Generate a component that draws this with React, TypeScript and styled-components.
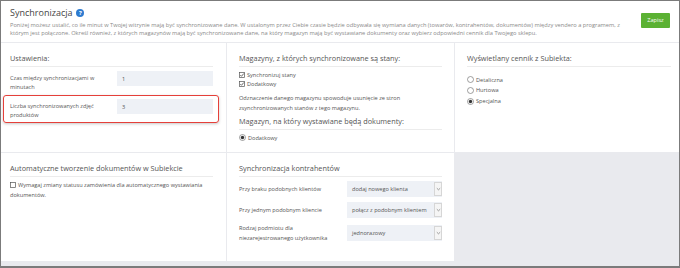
import React from "react";
import styled, { createGlobalStyle } from "styled-components";

const GlobalStyle = createGlobalStyle`
  html, body {
    margin: 0;
    padding: 0;
    background: #fff;
  }
  body {
    font-family: "Open Sans", "Liberation Sans", sans-serif;
    color: #555;
  }
`;

const StyledFrame = styled.div`
  width: 680px;
  height: 268px;
  box-sizing: border-box;
  border: 1px solid #7b7b7b;
  border-bottom-width: 2px;
  background: #e9eaee;
  display: flex;
  flex-direction: column;
  gap: 1px;
`;

const StyledHeader = styled.header`
  height: 41px;
  flex: none;
  background: #fff;
  display: flex;
  justify-content: space-between;
  align-items: flex-start;
  padding: 6px 9px 0 9px;
  box-sizing: border-box;
`;

const StyledTitle = styled.h1`
  margin: 0;
  font-size: 9px;
  line-height: 12px;
  font-weight: 400;
  color: #444;
  display: flex;
  align-items: center;
  gap: 4px;
`;

const StyledHelp = styled.span`
  width: 8px;
  height: 8px;
  border-radius: 50%;
  background: #2d7bd0;
  color: #fff;
  font-size: 6px;
  line-height: 8px;
  font-weight: 700;
  text-align: center;
`;

const StyledDescription = styled.p`
  margin: 1.5px 0 0;
  font-size: 5.7px;
  line-height: 8.7px;
  color: #8a8a8a;
  white-space: nowrap;
`;

const StyledSaveButton = styled.button`
  margin-top: 5.7px;
  width: 29px;
  height: 15px;
  padding: 0;
  border: none;
  border-radius: 1px;
  background: #5bb133;
  color: #fff;
  font-family: inherit;
  font-size: 5.6px;
`;

const StyledGrid = styled.div`
  display: grid;
  grid-template-columns: 225px 227px 1fr;
  grid-template-rows: 109px 108px;
  gap: 1px;
`;

const StyledCard = styled.section<{ $pl: number; $pr: number }>`
  background: #fff;
  padding: 10px ${(p) => p.$pr}px 0 ${(p) => p.$pl}px;
  box-sizing: border-box;
`;

const StyledHeading = styled.h2<{ $mt?: number }>`
  margin: ${(p) => p.$mt ?? 0}px 0 0;
  font-size: 7.3px;
  line-height: 11px;
  font-weight: 400;
  color: #555;
  padding-bottom: 2px;
  border-bottom: 1px solid #ececec;
`;

const StyledFields = styled.div`
  margin-top: 4px;
  display: flex;
  flex-direction: column;
  gap: 7px;
`;

const StyledFieldRow = styled.div<{ $highlighted?: boolean }>`
  position: relative;
  display: flex;
  align-items: flex-start;

  &::after {
    content: "";
    display: ${(p) => (p.$highlighted ? "block" : "none")};
    position: absolute;
    top: -4px;
    bottom: -3px;
    left: -7px;
    right: -6px;
    border: 1px solid #e5403a;
    border-radius: 3px;
    box-shadow: 0 1px 3px rgba(0, 0, 0, 0.22);
  }
`;

const StyledFieldLabel = styled.label<{ $width: number; $inset?: number; $lh?: number }>`
  width: ${(p) => p.$width}px;
  flex: none;
  padding-top: ${(p) => p.$inset ?? 3}px;
  font-size: 5.6px;
  line-height: ${(p) => p.$lh ?? 9}px;
  color: #555;
`;

const StyledInput = styled.input`
  width: 96px;
  height: 15px;
  box-sizing: border-box;
  border: none;
  background: #eef1f6;
  padding: 0 5px;
  font-family: inherit;
  font-size: 5.6px;
  color: #555;
  outline: none;
`;

const StyledChecks = styled.div<{ $mt: number; $lh: number }>`
  margin-top: ${(p) => p.$mt}px;
  font-size: 5.6px;
  line-height: ${(p) => p.$lh}px;
  color: #555;
`;

const StyledCheckLine = styled.div`
  display: flex;
  align-items: center;
  gap: 2px;
`;

const StyledNote = styled.p`
  margin: 4.5px 0 0;
  font-size: 5.6px;
  line-height: 10px;
  color: #555;
`;

const StyledInlineCheck = styled.p`
  margin: 3px 0 0;
  font-size: 5.6px;
  line-height: 10px;
  color: #555;

  svg {
    vertical-align: -0.5px;
    margin-right: 2px;
  }
`;

const StyledSelects = styled.div`
  margin-top: 4px;
  display: flex;
  flex-direction: column;
  gap: 5px;
`;

const StyledSelectRow = styled.div`
  display: flex;
  align-items: center;
`;

const StyledSelect = styled.div`
  width: 95px;
  height: 16px;
  flex: none;
  background: #eef1f6;
  display: flex;
  align-items: center;
  justify-content: space-between;
  padding-left: 5px;
  box-sizing: border-box;
  font-size: 5.6px;
  color: #555;
`;

const StyledSelectArrow = styled.span`
  width: 8px;
  height: 14px;
  box-sizing: border-box;
  border: 1px solid #d6d6d6;
  background: #f5f5f5;
  display: flex;
  align-items: center;
  justify-content: center;
`;

const CheckBox = ({ checked }: { checked?: boolean }) => (
  <svg width="6" height="6" viewBox="0 0 6 6">
    <rect x="0.5" y="0.5" width="5" height="5" fill="#fff" stroke="#555" strokeWidth="0.7" />
    {checked && <path d="M1.3 3.1 L2.5 4.3 L4.8 1.5" fill="none" stroke="#444" strokeWidth="0.8" />}
  </svg>
);

const Radio = ({ checked }: { checked?: boolean }) => (
  <svg width="7" height="7" viewBox="0 0 7 7">
    <circle cx="3.5" cy="3.5" r="3" fill="#fff" stroke="#777" strokeWidth="0.7" />
    {checked && <circle cx="3.5" cy="3.5" r="1.7" fill="#333" />}
  </svg>
);

const Chevron = () => (
  <svg width="5" height="4" viewBox="0 0 5 4">
    <path d="M0.8 1.2 L2.5 2.8 L4.2 1.2" fill="none" stroke="#777" strokeWidth="0.7" />
  </svg>
);

const stockOptions = [
  { label: "Synchronizuj stany", checked: true },
  { label: "Dodatkowy", checked: true },
];

const priceOptions = [
  { label: "Detaliczna", checked: false },
  { label: "Hurtowa", checked: false },
  { label: "Specjalna", checked: true },
];

const clientRows = [
  { label: "Przy braku podobnych klientów", value: "dodaj nowego klienta" },
  { label: "Przy jednym podobnym kliencie", value: "połącz z podobnym klientem" },
  { label: "Rodzaj podmiotu dla niezarejestrowanego użytkownika", value: "jednorazowy" },
];

export default function App() {
  return (
    <>
      <GlobalStyle />
      <StyledFrame>
        <StyledHeader>
          <div>
            <StyledTitle>
              Synchronizacja <StyledHelp>?</StyledHelp>
            </StyledTitle>
            <StyledDescription>
              Poniżej możesz ustalić, co ile minut w Twojej witrynie mają być synchronizowane dane. W ustalonym przez
              Ciebie czasie będzie odbywała się wymiana danych (towarów, kontrahentów, dokumentów) między vendero a
              programem, z
              <br />
              którym jest połączone. Określ również, z których magazynów mają być synchronizowane dane, na który
              magazyn mają być wystawiane dokumenty oraz wybierz odpowiedni cennik dla Twojego sklepu.
            </StyledDescription>
          </div>
          <StyledSaveButton>Zapisz</StyledSaveButton>
        </StyledHeader>

        <StyledGrid>
          <StyledCard $pl={9} $pr={13}>
            <StyledHeading>Ustawienia:</StyledHeading>
            <StyledFields>
              <StyledFieldRow>
                <StyledFieldLabel $width={107}>Czas między synchronizacjami w minutach</StyledFieldLabel>
                <StyledInput defaultValue="1" />
              </StyledFieldRow>
              <StyledFieldRow $highlighted>
                <StyledFieldLabel $width={107}>Liczba synchronizowanych zdjęć produktów</StyledFieldLabel>
                <StyledInput defaultValue="3" />
              </StyledFieldRow>
            </StyledFields>
          </StyledCard>

          <StyledCard $pl={12} $pr={12}>
            <StyledHeading>Magazyny, z których synchronizowane są stany:</StyledHeading>
            <StyledChecks $mt={4} $lh={8.5}>
              {stockOptions.map((o) => (
                <StyledCheckLine key={o.label}>
                  <CheckBox checked={o.checked} />
                  {o.label}
                </StyledCheckLine>
              ))}
            </StyledChecks>
            <StyledNote>
              Odznaczenie danego magazynu spowoduje usunięcie ze stron zsynchronizowanych stanów z tego magazynu.
            </StyledNote>
            <StyledHeading $mt={3}>Magazyn, na który wystawiane będą dokumenty:</StyledHeading>
            <StyledChecks $mt={4} $lh={8.5}>
              <StyledCheckLine>
                <Radio checked />
                Dodatkowy
              </StyledCheckLine>
            </StyledChecks>
          </StyledCard>

          <StyledCard $pl={12} $pr={8}>
            <StyledHeading>Wyświetlany cennik z Subiekta:</StyledHeading>
            <StyledChecks $mt={7.5} $lh={10.8}>
              {priceOptions.map((o) => (
                <StyledCheckLine key={o.label}>
                  <Radio checked={o.checked} />
                  {o.label}
                </StyledCheckLine>
              ))}
            </StyledChecks>
          </StyledCard>

          <StyledCard $pl={9} $pr={13}>
            <StyledHeading>Automatyczne tworzenie dokumentów w Subiekcie</StyledHeading>
            <StyledInlineCheck>
              <CheckBox />
              Wymagaj zmiany statusu zamówienia dla automatycznego wystawiania dokumentów.
            </StyledInlineCheck>
          </StyledCard>

          <StyledCard $pl={12} $pr={12}>
            <StyledHeading>Synchronizacja kontrahentów</StyledHeading>
            <StyledSelects>
              {clientRows.map((r) => (
                <StyledSelectRow key={r.label}>
                  <StyledFieldLabel $width={108} $inset={0} $lh={10}>
                    {r.label}
                  </StyledFieldLabel>
                  <StyledSelect>
                    {r.value}
                    <StyledSelectArrow>
                      <Chevron />
                    </StyledSelectArrow>
                  </StyledSelect>
                </StyledSelectRow>
              ))}
            </StyledSelects>
          </StyledCard>
        </StyledGrid>
      </StyledFrame>
    </>
  );
}
